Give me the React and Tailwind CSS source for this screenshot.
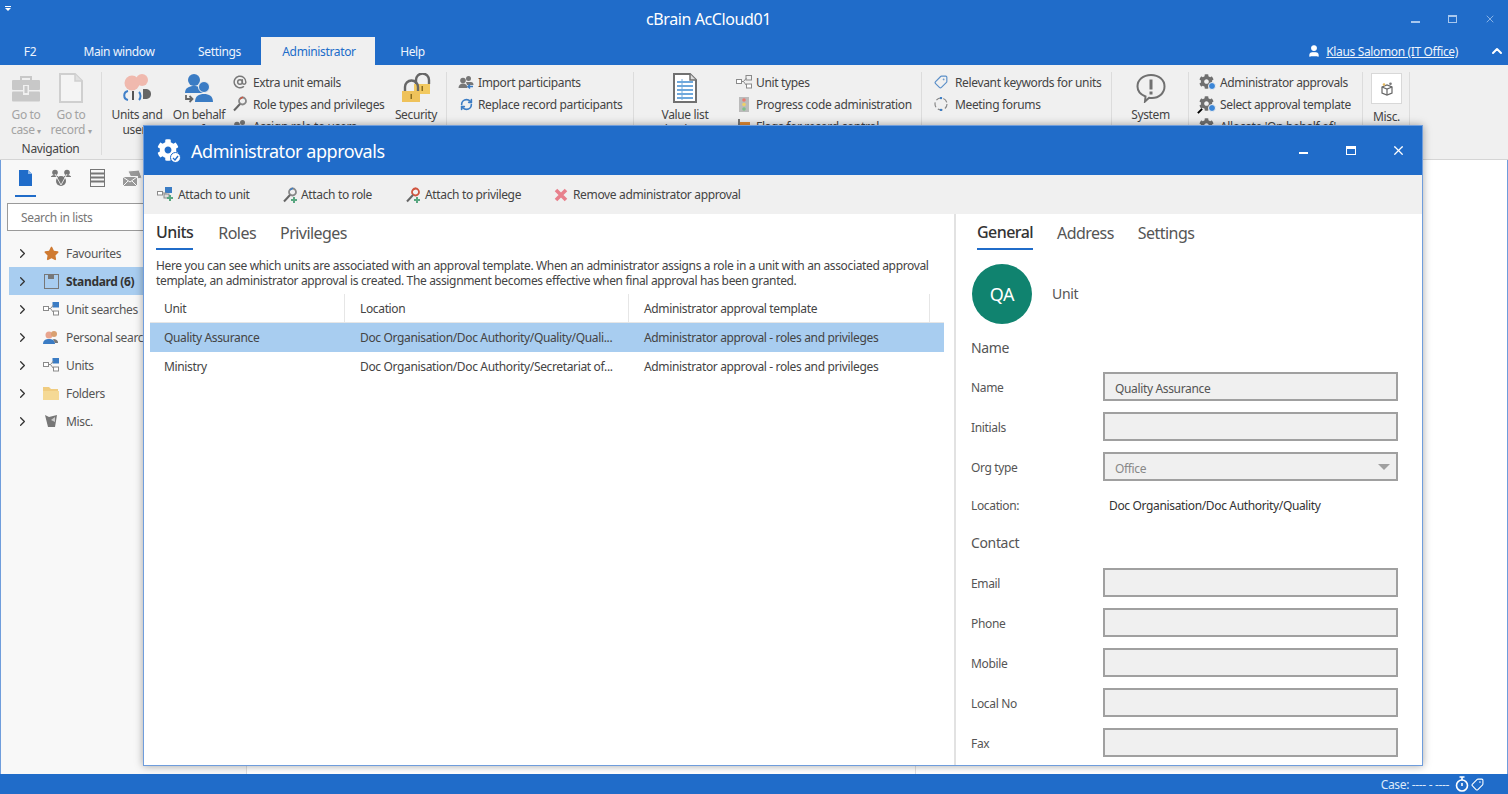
import React from "react";
import { ChevronRight, ChevronUp, AtSign, RefreshCw, Tag, X, User } from "lucide-react";
import { FaCog, FaStar } from "react-icons/fa";

const Briefcase = () => (
  <svg width="30" height="28" viewBox="0 0 30 28">
    <path d="M10 5V2h10v3" fill="none" stroke="#c8c8c8" strokeWidth="2" />
    <rect x="1" y="5" width="28" height="10" rx="1" fill="#c8c8c8" />
    <rect x="1" y="16.500" width="28" height="10" rx="1" fill="#c8c8c8" />
    <rect x="12" y="10" width="6" height="10" fill="#f0f0f0" />
    <rect x="13.500" y="11" width="3" height="7" fill="#c8c8c8" />
  </svg>
);
const DocGray = () => (
  <svg width="26" height="30" viewBox="0 0 26 30">
    <path d="M2 1h15l7 7v21H2z" fill="#f4f4f4" stroke="#cfcfcf" strokeWidth="2" />
    <path d="M17 1v7h7" fill="#e0e0e0" stroke="#cfcfcf" strokeWidth="1.500" />
  </svg>
);
const UnitsUsers = () => (
  <svg width="30" height="30" viewBox="0 0 30 30">
    <circle cx="10" cy="10" r="7.500" fill="#f0b9ae" />
    <circle cx="20" cy="7" r="6" fill="#f0b9ae" />
    <path d="M6 18c-5 1-5 8 0 9" fill="none" stroke="#3f7fc8" strokeWidth="2" />
    <path d="M17 19c2 2 2 6 0 8" fill="none" stroke="#3f7fc8" strokeWidth="2" />
    <path d="M11 18v9" stroke="#555" strokeWidth="2" />
    <path d="M21 16h2c4 0 6 2 6 5s-2 5-6 5h-2z" fill="#666" />
  </svg>
);
const OnBehalf = () => (
  <svg width="32" height="30" viewBox="0 0 32 30">
    <circle cx="11" cy="7" r="6" fill="#3b7cc4" />
    <path d="M2 20c0-5 4-7 9-7s9 2 9 7z" fill="#3b7cc4" />
    <circle cx="21" cy="14" r="5.500" fill="#3b7cc4" stroke="#f0f0f0" />
    <path d="M12 29c0-6 4-8 9-8s9 2 9 8z" fill="#3b7cc4" />
    <path d="M3 22v4h6M6.500 23l3 3-3 3" fill="none" stroke="#666" strokeWidth="1.800" />
  </svg>
);
const Padlocks = () => (
  <svg width="32" height="30" viewBox="0 0 32 30">
    <path d="M16 11V7a6.500 6.500 0 0 1 13 0v4" fill="none" stroke="#666" strokeWidth="2.400" />
    <rect x="14" y="11" width="16" height="10" fill="#f2c960" />
    <path d="M5 18v-4a6.500 6.500 0 0 1 13 0v4" fill="none" stroke="#666" strokeWidth="2.400" />
    <rect x="2" y="18" width="18" height="11" fill="#efc25a" />
    <rect x="10.500" y="21" width="1.500" height="5" fill="#8a6d20" />
    <rect x="21.500" y="13" width="1.500" height="5" fill="#8a6d20" />
  </svg>
);
const ValueList = () => (
  <svg width="26" height="30" viewBox="0 0 26 30">
    <path d="M2 1h16l6 6v22H2z" fill="#fff" stroke="#707070" strokeWidth="2" />
    <path d="M18 1v6h6" fill="#ddd" stroke="#707070" strokeWidth="1.500" />
    <path d="M5 9h16M5 13h16M5 17h16M5 21h16M5 25h16" stroke="#6fa8dc" strokeWidth="2" />
    <path d="M10 6v21" stroke="#6fa8dc" strokeWidth="1" />
  </svg>
);
const SystemIcon = () => (
  <svg width="30" height="30" viewBox="0 0 30 30">
    <path d="M15 2c8 0 13.500 5 13.500 11.500S23 25 16 25c-1 0-2 0-3-.2L9 28.500l.5-5C4.500 21.500 1.500 18 1.500 13.500 1.500 7 7 2 15 2z" fill="none" stroke="#707070" strokeWidth="2" />
    <rect x="13.500" y="6.500" width="3" height="10" fill="#707070" />
    <rect x="13.500" y="18.500" width="3" height="3" fill="#707070" />
  </svg>
);
const BoxIcon = () => (
  <svg width="14" height="14" viewBox="0 0 14 14">
    <path d="M2 5l5-2 5 2v6l-5 2-5-2z" fill="none" stroke="#666" strokeWidth="1.200" />
    <path d="M2 5l5 2 5-2M7 7v6" fill="none" stroke="#666" strokeWidth="1.200" />
    <circle cx="4" cy="2.500" r="1.300" fill="#e5b85c" />
    <circle cx="10.500" cy="1.800" r="1.300" fill="#777" />
  </svg>
);
const UnitNet = ({ accent = "#3b7cc4" }) => (
  <svg width="16" height="14" viewBox="0 0 16 14">
    <rect x="0.500" y="4.500" width="5" height="4" fill="#fff" stroke="#8a8a8a" />
    <rect x="10" y="0.500" width="5.500" height="4.500" fill={accent} stroke={accent === "#f0f0f0" ? "#8a8a8a" : accent} />
    <rect x="10.500" y="9" width="5" height="4" fill="#fff" stroke="#8a8a8a" />
    <path d="M5.500 6.500h2l3-3.500M7.500 6.500l3 4" fill="none" stroke="#8a8a8a" />
  </svg>
);
const UnitPlus = () => (
  <svg width="17" height="15" viewBox="0 0 17 15">
    <rect x="0.500" y="4.500" width="5" height="3.500" fill="#fff" stroke="#8a8a8a" />
    <rect x="8.500" y="0.500" width="6" height="5" fill="#3b7cc4" stroke="#3b7cc4" />
    <path d="M5.500 6h4" stroke="#8a8a8a" />
    <rect x="7" y="7" width="5" height="4" fill="#ddd" stroke="#8a8a8a" />
    <path d="M13 8v6M10 11h6" stroke="#58a680" strokeWidth="2" />
  </svg>
);
const KeyIcon = ({ head = "#888", plus = false, dot = "#d0553f" }) => (
  <svg width="16" height="16" viewBox="0 0 16 16">
    <circle cx="10.500" cy="5" r="3.500" fill="none" stroke={head} strokeWidth="1.800" />
    <path d="M8 8l-6 6.500" stroke="#666" strokeWidth="2" />
    <path d="M8 3l3-2" stroke={dot} strokeWidth="1.500" />
    {plus && <path d="M12 10v6M9 13h6" stroke="#58a680" strokeWidth="2" />}
  </svg>
);
const People = ({ arrow = true }) => (
  <svg width="16" height="15" viewBox="0 0 16 15">
    <circle cx="5" cy="5.500" r="2.800" fill="#777" />
    <path d="M0.500 13c0-3 2-4.500 4.500-4.500S9.500 10 9.500 13z" fill="#777" />
    <circle cx="10.500" cy="3.500" r="2.500" fill="#777" />
    <path d="M8 7h5c1.500 0 2.500 1 2.500 3H9z" fill="#777" />
    {arrow && <path d="M15 11.500h-5M12 9.500l-2 2 2 2" fill="none" stroke="#3b7cc4" strokeWidth="1.500" />}
  </svg>
);
const Traffic = () => (
  <svg width="10" height="15" viewBox="0 0 10 15">
    <rect x="0" y="0" width="10" height="15" fill="#bbb" />
    <circle cx="5" cy="3" r="1.800" fill="#e87a70" />
    <circle cx="5" cy="7.500" r="1.800" fill="#ecd06a" />
    <circle cx="5" cy="12" r="1.800" fill="#7fc08a" />
  </svg>
);
const Flag = () => (
  <svg width="14" height="15" viewBox="0 0 14 15">
    <path d="M2 0v15" stroke="#777" strokeWidth="2" />
    <path d="M3 3h10v7H3z" fill="#e08a34" />
  </svg>
);
const DashedCircle = () => (
  <svg width="14" height="14" viewBox="0 0 14 14">
    <circle cx="7" cy="7" r="6" fill="none" stroke="#888" strokeWidth="1.200" strokeDasharray="5 2.500" />
    <circle cx="7" cy="1" r="1.200" fill="#3b7cc4" />
    <circle cx="7" cy="13" r="1.200" fill="#3b7cc4" />
  </svg>
);
const GearCheck = ({ search = false }) => (
  <span className="relative block w-[16px] h-[16px]">
    <FaCog size={15} color="#6f6f6f" />
    <span className="absolute right-[-1px] bottom-0 w-[8px] h-[8px] rounded-full bg-[#3b86d8] border border-[#f0f0f0]" />
    {search && <span className="absolute left-[-2px] bottom-0 w-[6px] h-[2px] bg-black -rotate-45" />}
  </span>
);

const RLabel = ({ children }) => <span className="block leading-[15px]">{children}</span>;

const Large = ({ w, icon, lines, disabled }) => (
  <div className={`flex flex-col items-center shrink-0 ${w} ${disabled ? "text-[#a3a3a3]" : "text-[#444]"}`}>
    <div className="flex items-end justify-center h-[31px]">{icon}</div>
    <div className="text-center whitespace-nowrap mt-[4px]">
      {lines.map((l, i) => (
        <RLabel key={i}>{l}</RLabel>
      ))}
    </div>
  </div>
);

const Small = ({ icon, text, gap = "mr-[5px]" }) => (
  <div className="flex items-center h-[22px] whitespace-nowrap text-[#444]">
    <span className={`flex justify-center shrink-0 w-[16px] ${gap}`}>{icon}</span>
    {text}
  </div>
);

const Group = ({ w, children, className = "" }) => (
  <div className={`shrink-0 mt-[7px] h-[83px] flex border-r border-[#dcdcdc] ${w} ${className}`}>{children}</div>
);

const SmallList = ({ className, children }) => <div className={`-mt-[1px] ${className}`}>{children}</div>;

const Tree = ({ icon, text, active }) => (
  <div className={`flex items-center h-[28px] ml-[8px] whitespace-nowrap ${active ? "bg-[#a8cdf0] font-bold text-[#333]" : "text-[#555]"}`}>
    <ChevronRight size={15} strokeWidth={2} color="#333" className="ml-[6px] shrink-0" />
    <span className="flex justify-center w-[16px] ml-[13px] mr-[7px] shrink-0">{icon}</span>
    {text}
  </div>
);

const Field = ({ label, value, select, muted }) => (
  <div className="flex items-center h-[29px] mb-[11px]">
    <span className="w-[132px] pt-px text-[#555]">{label}</span>
    <div className={`flex items-center justify-between w-[295px] h-[29px] bg-[#f0f0f0] border-2 border-[#a0a0a0] pl-[10px] pr-[6px] ${muted ? "text-[#888]" : "text-[#555]"}`}>
      <span className="pt-[3px]">{value}</span>
      {select && <span className="w-0 h-0 border-x-[6px] border-x-transparent border-t-[6px] border-t-[#a0a0a0]" />}
    </div>
  </div>
);

const Row = ({ a, b, c, active }) => (
  <div className={`grid grid-cols-[195px_284px_301px_14px] items-center h-[29px] text-[#444] ${active ? "bg-[#a8cdf0]" : ""}`}>
    <span className="pl-[14px]">{a}</span>
    <span className="pl-[15px] whitespace-nowrap">{b}</span>
    <span className="pl-[15px] whitespace-nowrap">{c}</span>
    <span />
  </div>
);

const HeadCell = ({ children, pl }) => (
  <span className={`flex items-center h-full border-r border-[#e6e6e6] ${pl}`}>{children}</span>
);

export default function App() {
  return (
    <div
      className="relative w-[1508px] h-[794px] overflow-hidden flex flex-col bg-white text-[12px] leading-[15px] tracking-[-0.35px]"
      style={{ fontFamily: '"Noto Sans", "Open Sans", sans-serif' }}
    >
      {/* title bar */}
      <div className="h-[37px] shrink-0 flex items-center bg-[#206cc9] text-white">
        <span className="flex flex-col items-center gap-[1px] ml-[5px] mb-[20px] w-[6px] shrink-0">
          <span className="w-[6px] h-[1px] bg-white" />
          <span className="w-0 h-0 border-x-[3px] border-x-transparent border-t-[3px] border-t-white" />
        </span>
        <span className="ml-[635px] pt-[2px] text-[16px] tracking-[-0.4px] whitespace-nowrap">cBrain AcCloud01</span>
        <div className="ml-auto flex items-center text-[#a9c8ee]">
          <span className="w-[37px] flex justify-center pt-[7px]"><span className="block w-[9px] h-[2px] bg-[#a9c8ee]" /></span>
          <span className="w-[37px] flex justify-center"><span className="block w-[9px] h-[8px] border border-t-[2px] border-[#a9c8ee]" /></span>
          <span className="w-[37px] flex justify-center"><X size={12} strokeWidth={1.500} /></span>
        </div>
      </div>
      {/* tabs */}
      <div className="h-[28px] shrink-0 flex items-stretch bg-[#206cc9] text-[#eef4fc]">
        <span className="w-[60px] flex items-center justify-center">F2</span>
        <span className="w-[118px] flex items-center justify-center">Main window</span>
        <span className="w-[83px] flex items-center justify-center">Settings</span>
        <span className="w-[114px] pl-[2px] flex items-center justify-center bg-[#f0f0f0] text-[#206cc9]">Administrator</span>
        <span className="w-[75px] flex items-center justify-center">Help</span>
        <div className="ml-auto flex items-center">
          <User size={14} fill="white" color="white" className="mr-[5px]" />
          <span className="underline whitespace-nowrap">Klaus Salomon (IT Office)</span>
          <ChevronUp size={16} strokeWidth={3} color="white" className="ml-[31px] mr-[3px]" />
        </div>
      </div>
      {/* ribbon */}
      <div className="h-[95px] shrink-0 flex items-start bg-[#f0f0f0] border-b border-[#d5d5d5] overflow-hidden">
        <Group w="w-[102px]" className="flex-col">
          <div className="flex pl-[4px]">
            <Large w="w-[44px]" disabled icon={<Briefcase />} lines={["Go to", <>case <span className="text-[8px]">▾</span></>]} />
            <Large w="w-[46px]" disabled icon={<DocGray />} lines={["Go to", <>record <span className="text-[8px]">▾</span></>]} />
          </div>
          <span className="mt-auto h-[14px] leading-[16px] text-center text-[#444]">Navigation</span>
        </Group>
        <Group w="w-[345px]">
          <Large w="w-[70px]" icon={<UnitsUsers />} lines={["Units and", "users"]} />
          <Large w="w-[54px]" icon={<OnBehalf />} lines={["On behalf", "of"]} />
          <SmallList className="w-[160px] pl-[6px]">
            <Small icon={<AtSign size={14} strokeWidth={2.500} color="#777" />} text="Extra unit emails" />
            <Small icon={<KeyIcon />} text="Role types and privileges" />
            <Small icon={<People arrow={false} />} text="Assign role to users" />
          </SmallList>
          <Large w="w-[60px]" icon={<Padlocks />} lines={["Security"]} />
        </Group>
        <Group w="w-[187px]">
          <SmallList className="pl-[11px]">
            <Small gap="mr-[4px]" icon={<People />} text="Import participants" />
            <Small gap="mr-[4px]" icon={<RefreshCw size={13} strokeWidth={3} color="#3b7cc4" />} text="Replace record participants" />
          </SmallList>
        </Group>
        <Group w="w-[288px]">
          <Large w="w-[102px]" icon={<ValueList />} lines={["Value list", "database"]} />
          <SmallList className="">
            <Small gap="mr-[4px]" icon={<UnitNet accent="#f0f0f0" />} text="Unit types" />
            <Small gap="mr-[4px]" icon={<Traffic />} text="Progress code administration" />
            <Small gap="mr-[4px]" icon={<Flag />} text="Flags for record control" />
          </SmallList>
        </Group>
        <Group w="w-[190px]">
          <SmallList className="pl-[11px]">
            <Small gap="mr-[6px]" icon={<Tag size={14} color="#5b8fc8" strokeWidth={2} className="rotate-90" />} text="Relevant keywords for units" />
            <Small gap="mr-[6px]" icon={<DashedCircle />} text="Meeting forums" />
          </SmallList>
        </Group>
        <Group w="w-[77px]">
          <Large w="w-[77px]" icon={<SystemIcon />} lines={["System"]} />
        </Group>
        <Group w="w-[174px]">
          <SmallList className="pl-[10px]">
            <Small icon={<GearCheck />} text="Administrator approvals" />
            <Small icon={<GearCheck search />} text="Select approval template" />
            <Small icon={<GearCheck />} text="Allocate 'On behalf of'" />
          </SmallList>
        </Group>
        <Group w="w-[47px]">
          <div className="flex flex-col items-center w-full pl-px text-[#444]">
            <div className="flex items-center justify-center w-[31px] h-[31px] mt-[1px] bg-white border border-[#d8d8d8]"><BoxIcon /></div>
            <span className="mt-[5px]">Misc.</span>
          </div>
        </Group>
      </div>
      {/* main */}
      <div className="flex-1 flex min-h-0">
        <aside className="w-[247px] shrink-0 bg-[#f8f8f8] border-l border-l-[#6f9ddc] border-r border-r-[#dedede]">
          <div className="flex h-[37px] pl-[14px]">
            <div className="w-[21px] h-[37px] border-b-2 border-[#206cc9] flex justify-center pt-[10px]">
              <svg width="13" height="16" viewBox="0 0 13 16"><path d="M0 0h9l4 4v12H0z" fill="#206cc9" /><path d="M9 0v4h4" fill="#8fb8e8" /></svg>
            </div>
            <div className="ml-[15px] pt-[9px]">
              <svg width="20" height="18" viewBox="0 0 20 18">
                <circle cx="4" cy="3.500" r="2.800" fill="#777" /><circle cx="16" cy="3.500" r="2.800" fill="#777" /><circle cx="10" cy="12" r="5" fill="#777" />
                <path d="M0 8c1-2 6-2 7 0M13 8c1-2 6-2 7 0" fill="#777" stroke="#777" />
                <path d="M4 5l6 11 6-11" stroke="#fff" strokeWidth="0.800" fill="none" />
              </svg>
            </div>
            <div className="ml-[19px] pt-[9px]">
              <svg width="15" height="18" viewBox="0 0 15 18"><rect x="0.500" y="0.500" width="14" height="17" fill="none" stroke="#777" /><path d="M1 4.500h13M1 8.500h13M1 12.500h13" stroke="#777" strokeWidth="2" /></svg>
            </div>
            <div className="ml-[17px] pt-[10px]">
              <svg width="20" height="17" viewBox="0 0 20 17">
                <path d="M6 1l11-1 3 8-10 2z" fill="#999" stroke="#f8f8f8" />
                <rect x="0.500" y="6.500" width="15" height="10" fill="#999" stroke="#f8f8f8" />
                <path d="M1 7l7 5 7-5M1 16l5-5M15 16l-5-5" fill="none" stroke="#f8f8f8" />
              </svg>
            </div>
          </div>
          <div className="ml-[6px] mt-[6px] w-[200px] h-[28px] bg-white border border-[#9a9a9a] flex items-center pl-[13px] text-[#777]">Search in lists</div>
          <div className="mt-[8px]">
            <Tree icon={<FaStar size={15} color="#cf7a31" />} text="Favourites" />
            <Tree active icon={<svg width="15" height="15" viewBox="0 0 15 15"><rect x="0.500" y="0.500" width="14" height="14" fill="none" stroke="#777" /><rect x="4" y="1" width="6" height="4" fill="#777" /></svg>} text="Standard (6)" />
            <Tree icon={<UnitNet />} text="Unit searches" />
            <Tree icon={<svg width="16" height="15" viewBox="0 0 16 15"><circle cx="6" cy="5" r="3.500" fill="#e9a58f" /><circle cx="11" cy="4" r="3" fill="#d9a070" /><path d="M0 14c0-4 3-5 6-5s6 1 6 5z" fill="#3b7cc4" /><path d="M10 9c3 0 5 1 5 4h-3z" fill="#777" /></svg>} text="Personal searches" />
            <Tree icon={<UnitNet />} text="Units" />
            <Tree icon={<svg width="16" height="14" viewBox="0 0 16 14"><path d="M0 1h6l2 2h7v11H0z" fill="#f0cc80" /><path d="M0 5h16v9H0z" fill="#f5d995" /></svg>} text="Folders" />
            <Tree icon={<svg width="14" height="14" viewBox="0 0 14 14"><path d="M1 1l4 2 8-2-2 12H4z" fill="#777" /><path d="M7 6l4-3v5z" fill="#ccc" /></svg>} text="Misc." />
          </div>
        </aside>
        <div className="w-[669px] shrink-0 border-r border-[#e0e0e0]" />
        <div className="flex-1 border-r border-[#6f9ddc]" />
      </div>
      {/* status bar */}
      <div className="h-[20px] shrink-0 flex items-center justify-end bg-[#206cc9] text-[#dce9f9] pr-[24px]">
        <span className="whitespace-nowrap">Case: ---- - ----</span>
        <svg width="14" height="16" viewBox="0 0 14 16" className="ml-[6px]">
          <circle cx="7" cy="9.500" r="5.500" fill="none" stroke="white" strokeWidth="1.600" />
          <path d="M4.500 1h5M7 1v3M7 7v3" stroke="white" strokeWidth="1.600" fill="none" />
        </svg>
        <Tag size={13} color="white" className="ml-[2px] rotate-90" />
      </div>

      {/* dialog */}
      <div className="absolute left-[143px] top-[125px] w-[1280px] h-[641px] flex flex-col bg-white border border-[#6f9ddc] shadow-[0_0_8px_rgba(0,0,0,0.35)] text-[#444]">
        <div className="h-[49px] shrink-0 flex items-center bg-[#206cc9] text-white">
          <span className="relative block ml-[13px] w-[23px] h-[23px]">
            <FaCog size={22} color="white" />
            <span className="absolute right-[-1px] bottom-[-1px] flex items-center justify-center w-[11px] h-[11px] rounded-full bg-white border border-[#206cc9]">
              <svg width="7" height="6" viewBox="0 0 7 6"><path d="M1 3l2 2 3-4" fill="none" stroke="#206cc9" strokeWidth="1.300" /></svg>
            </span>
          </span>
          <span className="ml-[11px] pt-[2px] text-[18px] tracking-[-0.45px] whitespace-nowrap">Administrator approvals</span>
          <div className="ml-auto flex items-center">
            <span className="w-[47px] flex justify-center pt-[5px]"><span className="block w-[9px] h-[2px] bg-white" /></span>
            <span className="w-[47px] flex justify-center"><span className="block w-[10px] h-[9px] border border-t-[3px] border-white" /></span>
            <span className="w-[48px] flex justify-center"><X size={15} strokeWidth={2} /></span>
          </div>
        </div>
        <div className="h-[39px] shrink-0 flex items-center bg-[#f0f0f0] pl-[13px]">
          <div className="w-[125px] flex items-center"><span className="mr-[4px]"><UnitPlus /></span>Attach to unit</div>
          <div className="w-[123px] flex items-center"><span className="mr-[3px]"><KeyIcon plus dot="#3b7cc4" /></span>Attach to role</div>
          <div className="w-[149px] flex items-center"><span className="mr-[4px]"><KeyIcon plus head="#d0553f" /></span>Attach to privilege</div>
          <div className="flex items-center whitespace-nowrap"><svg width="14" height="14" viewBox="0 0 14 14" className="mr-[5px]"><path d="M2 2l10 10M12 2L2 12" stroke="#e8808c" strokeWidth="3.600" /></svg>Remove administrator approval</div>
        </div>
        <div className="flex-1 flex min-h-0 overflow-hidden">
          <div className="w-[812px] shrink-0 border-r-2 border-[#e2e2e2]">
            <div className="flex h-[36px] pl-[12px] text-[16px] tracking-[-0.55px]">
              <span className="flex items-center h-[36px] pt-[3px] border-b-2 border-[#206cc9] font-medium text-[#333] mr-[25px]">Units</span>
              <span className="flex items-center h-[36px] pt-[2px] mr-[24px] text-[#555]">Roles</span>
              <span className="flex items-center h-[36px] pt-[2px] text-[#555]">Privileges</span>
            </div>
            <p className="mt-[8px] pl-[12px] whitespace-nowrap">
              Here you can see which units are associated with an approval template. When an administrator assigns a role in a unit with an associated approval
              <br />
              template, an administrator approval is created. The assignment becomes effective when final approval has been granted.
            </p>
            <div className="ml-[6px] mt-[6px] w-[794px]">
              <div className="grid grid-cols-[195px_284px_301px_14px] h-[29px] border-b border-[#e6e6e6]">
                <HeadCell pl="pl-[14px]">Unit</HeadCell>
                <HeadCell pl="pl-[15px]">Location</HeadCell>
                <HeadCell pl="pl-[15px]">Administrator approval template</HeadCell>
                <span />
              </div>
              <Row active a="Quality Assurance" b="Doc Organisation/Doc Authority/Quality/Quali..." c="Administrator approval - roles and privileges" />
              <Row a="Ministry" b="Doc Organisation/Doc Authority/Secretariat of..." c="Administrator approval - roles and privileges" />
            </div>
          </div>
          <div className="flex-1 pl-[15px]">
            <div className="flex h-[36px] ml-[6px] text-[16px] tracking-[-0.55px]">
              <span className="flex items-center h-[36px] pt-[3px] border-b-2 border-[#206cc9] font-medium text-[#333] mr-[24px]">General</span>
              <span className="flex items-center h-[36px] pt-[2px] mr-[24px] text-[#555]">Address</span>
              <span className="flex items-center h-[36px] pt-[2px] text-[#555]">Settings</span>
            </div>
            <div className="flex items-center mt-[14px] ml-[1px] h-[60px]">
              <span className="flex items-center justify-center w-[60px] h-[60px] rounded-full bg-[#10836f] text-white text-[18px]">QA</span>
              <span className="ml-[20px] text-[14px] text-[#555] mb-[2px]">Unit</span>
            </div>
            <h3 className="mt-[14px] h-[20px] leading-[20px] text-[14px] text-[#555] mb-[14px]">Name</h3>
            <Field label="Name" value="Quality Assurance" />
            <Field label="Initials" />
            <Field label="Org type" value="Office" select muted />
            <div className="flex mt-[17px] h-[15px]">
              <span className="w-[138px] text-[#555]">Location:</span>
              <span className="text-[#333] whitespace-nowrap">Doc Organisation/Doc Authority/Quality</span>
            </div>
            <h3 className="mt-[20px] h-[20px] leading-[20px] text-[14px] text-[#555] mb-[15px]">Contact</h3>
            <Field label="Email" />
            <Field label="Phone" />
            <Field label="Mobile" />
            <Field label="Local No" />
            <Field label="Fax" />
          </div>
        </div>
      </div>
    </div>
  );
}
